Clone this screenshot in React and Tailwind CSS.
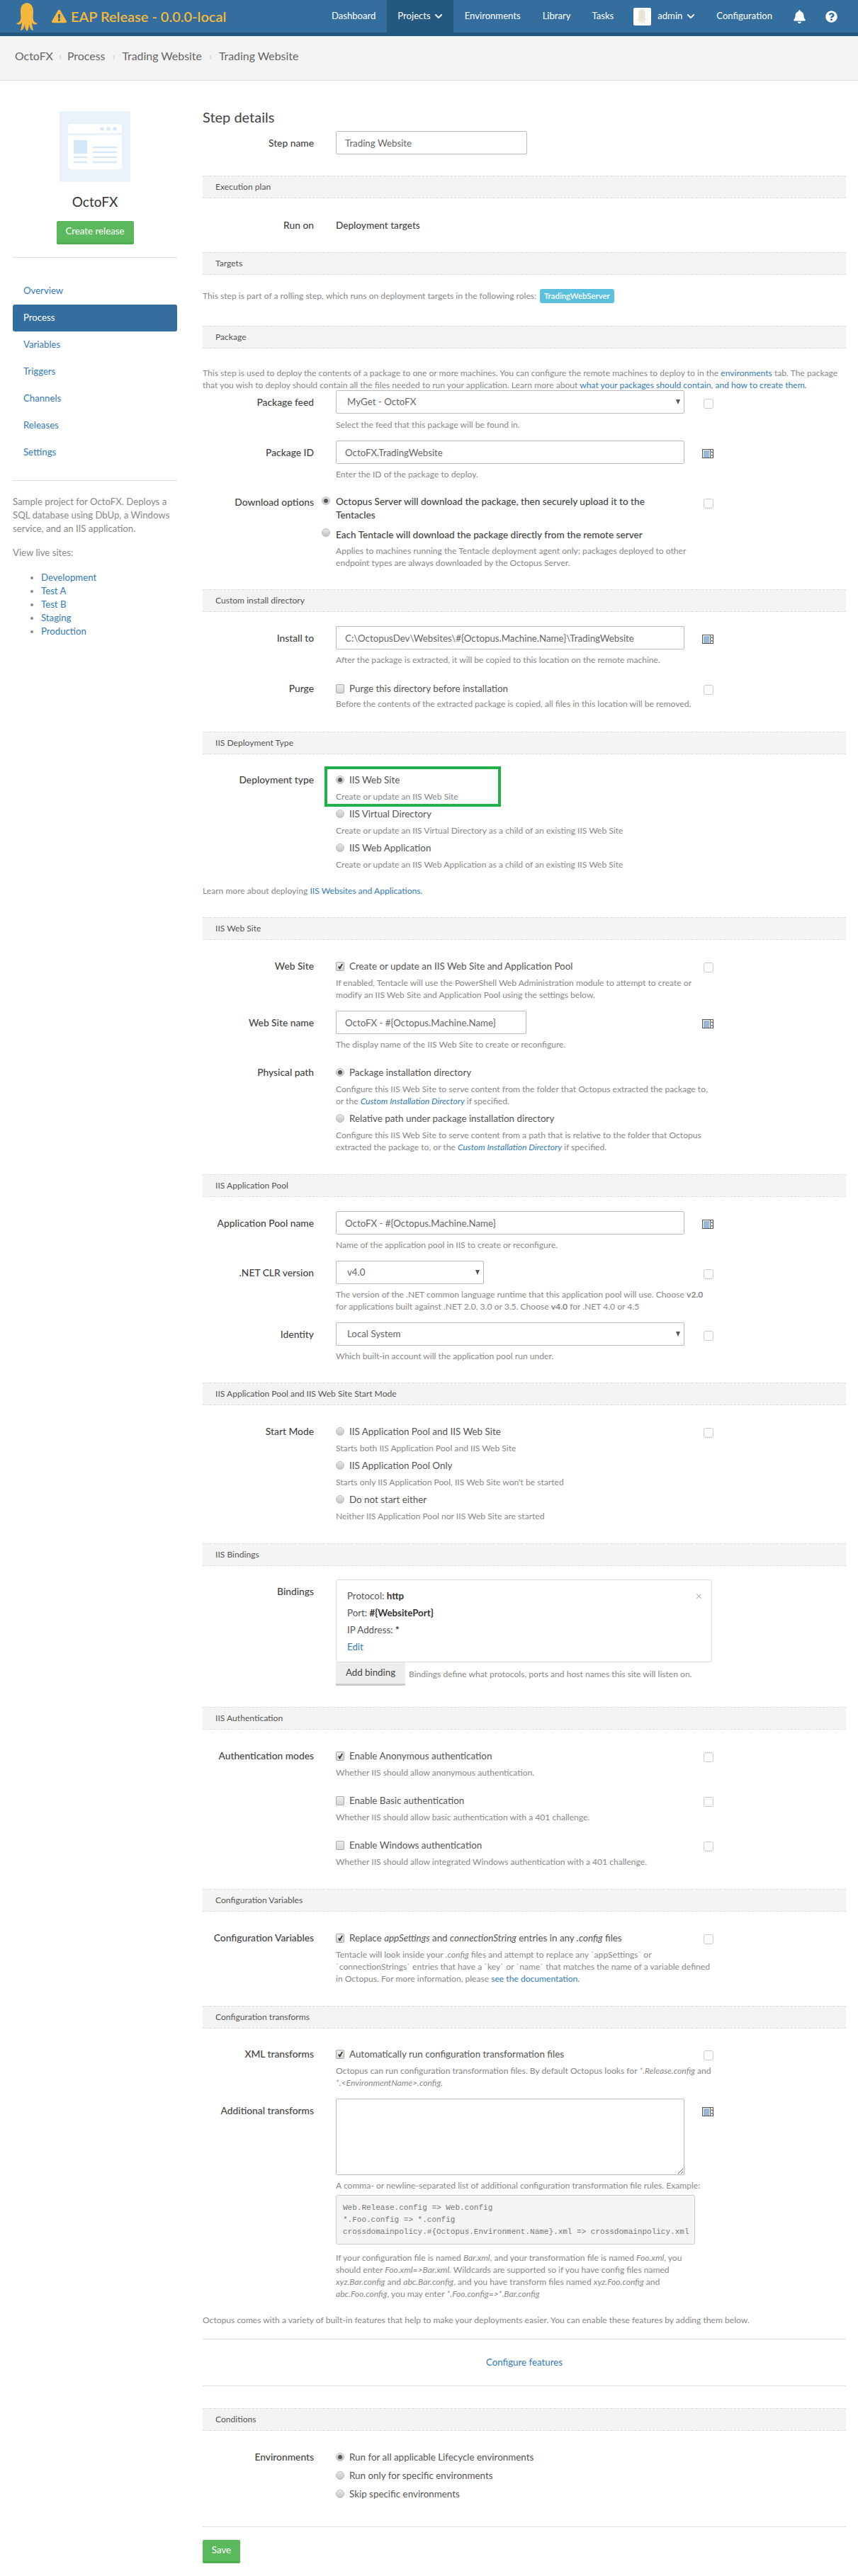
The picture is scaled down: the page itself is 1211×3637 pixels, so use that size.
import React from 'react';
import { FaBell, FaChevronDown, FaExclamationTriangle, FaQuestionCircle } from 'react-icons/fa';

const Octopus = ({ className, color }) => (
    <svg viewBox="0 0 32 40" className={className} fill={color}>
        <path d="M16 0C9 0 6 5 6 12c0 5 1 8 0 12-1 3-3 4-6 5 2 2 5 2 7 0l1-2c0 4-1 8-2 12 3 0 5-4 6-9 0 4 1 8 3 10 2-2 3-6 3-10 1 5 3 9 6 9-1-4-2-8-2-12l1 2c2 2 5 2 7 0-3-1-5-2-6-5-1-4 0-7 0-12 0-7-3-12-10-12z" />
    </svg>
);

const Radio = ({ on }) => (
    <span className="w-[12px] h-[12px] rounded-full border border-[#bbb] bg-linear-to-b from-[#e8e8e8] to-[#c4c4c4] flex items-center justify-center shrink-0">
        {on && <span className="w-[6px] h-[6px] rounded-full bg-[#555]" />}
    </span>
);

const Check = ({ on }) => (
    <span className="w-[12px] h-[13px] rounded-[2px] border border-[#aaa] bg-linear-to-b from-[#eee] to-[#d4d4d4] flex items-center justify-center shrink-0">
        {on && (
            <svg viewBox="0 0 10 10" className="w-[9px] h-[9px]" fill="none" stroke="#333" strokeWidth="2">
                <path d="M2 5l2 3 4-7" />
            </svg>
        )}
    </span>
);

const SideCheck = () => <span className="block w-[14px] h-[14px] rounded-[3px] border border-[#ccc] bg-white" />;

const VarIcon = () => (
    <svg viewBox="0 0 16 13" className="w-[16px] h-[13px]">
        <rect x="0.5" y="0.5" width="15" height="12" fill="#fff" stroke="#555" />
        <path d="M2 3h8M2 5h8M2 7h8M2 9h8M2 11h8" stroke="#2f6fb5" strokeWidth="1" />
        <path d="M11.5 0.5v12" stroke="#555" />
        <path d="M12.5 5l1.2-2.5L15 5zM12.5 8l1.2 2.5L15 8z" fill="#555" />
    </svg>
);

const Help = ({ className = '', children }) => (
    <div className={`text-[12.1px] leading-[17px] text-[#888] whitespace-nowrap ${className}`}>{children}</div>
);

const Link = ({ children }) => <a className="text-[#337ab7]">{children}</a>;

const Bar = ({ title, className = '' }) => (
    <div className={`h-[32px] flex items-center pl-[18px] bg-[#f4f4f4] border-y border-dashed border-[#ddd] text-[12.1px] text-[#555] ${className}`}>
        {title}
    </div>
);

// label column, content column and the little "bind" control on the right
const Row = ({ label, field, side, className = '', children }) => (
    <div className={`flex ${className}`}>
        <div className={`w-[157px] mr-[31px] text-right text-[13.8px] leading-[20px] font-medium text-[#444] shrink-0 whitespace-nowrap ${field ? 'pt-[7px]' : ''}`}>
            {label}
        </div>
        <div className="w-[517px] shrink-0">{children}</div>
        <div className={`w-[16px] flex justify-end items-start ${field ? 'pt-[12px]' : 'pt-[5px]'}`}>
            {side === 'check' && <SideCheck />}
            {side === 'var' && <VarIcon />}
        </div>
    </div>
);

const TextInput = ({ value, w = 'w-[492px]' }) => (
    <input
        readOnly
        value={value}
        className={`block ${w} h-[33px] px-[12px] border border-[#bbb] rounded-[2px] bg-white text-[13.3px] text-[#666] outline-none`}
    />
);

const Select = ({ value, w = 'w-[492px]' }) => (
    <div className={`relative ${w}`}>
        <select className="block w-full h-[33px] pl-[15px] border border-[#bbb] rounded-[2px] bg-white text-[13.3px] text-[#666] appearance-none outline-none">
            <option>{value}</option>
        </select>
        <svg viewBox="0 0 6 7" className="absolute right-[6px] top-[13px] w-[6px] h-[7px]" fill="#555">
            <path d="M0 0h6L3 7z" />
        </svg>
    </div>
);

const Option = ({ type = 'radio', on, label, className = '' }) => (
    <div className={`flex items-center gap-[7px] h-[20px] text-[13.4px] text-[#555] whitespace-nowrap ${className}`}>
        {type === 'radio' ? <Radio on={on} /> : <Check on={on} />}
        <span>{label}</span>
    </div>
);

const navLinks = ['Overview', 'Process', 'Variables', 'Triggers', 'Channels', 'Releases', 'Settings'];
const sites = ['Development', 'Test A', 'Test B', 'Staging', 'Production'];

const Sidebar = () => (
    <aside className="w-[232px] ml-[18px] shrink-0 text-[13.2px]">
        <svg viewBox="0 0 100 100" className="block w-[100px] h-[100px] mt-[43px] mx-auto">
            <rect width="100" height="100" rx="2" fill="#eaf3fb" />
            <rect x="12" y="18" width="76" height="64" rx="5" fill="#fff" />
            <rect x="12" y="31" width="76" height="3" fill="#eaf3fb" />
            <circle cx="60" cy="25" r="2.7" fill="#d5e8f7" />
            <circle cx="69" cy="25" r="2.7" fill="#d5e8f7" />
            <circle cx="78" cy="25" r="2.7" fill="#d5e8f7" />
            <rect x="20" y="41" width="19" height="19" fill="#d5e8f7" />
            <path d="M47 51h34M47 58h34M47 65h34M47 72h34M20 65h19M20 72h19" stroke="#d5e8f7" strokeWidth="2.5" />
        </svg>
        <div className="mt-[14px] text-center text-[19px] leading-[28px] text-[#333]">OctoFX</div>
        <button className="block mx-auto mt-[13px] w-[109px] h-[33px] bg-[#5cb85c] border-b-[3px] border-[#4cae4c] rounded-[2px] text-white text-[13.3px]">
            Create release
        </button>
        <div className="mt-[18px] border-t border-[#ddd]" />
        <nav className="mt-[28px]">
            {navLinks.map((item) => (
                <a
                    key={item}
                    className={`flex items-center h-[38px] pl-[15px] rounded-[3px] ${item === 'Process' ? 'bg-[#336e9f] text-white' : 'text-[#337ab7]'}`}
                >
                    {item}
                </a>
            ))}
        </nav>
        <div className="mt-[20px] border-t border-[#ddd]" />
        <p className="mt-[20px] leading-[19px] text-[#888]">
            Sample project for OctoFX. Deploys a SQL database using DbUp, a Windows service, and an IIS application.
        </p>
        <p className="mt-[15px] leading-[19px] text-[#888]">View live sites:</p>
        <ul className="mt-[16px] pl-[40px] list-disc leading-[19px] text-[#888]">
            {sites.map((site) => (
                <li key={site}>
                    <Link>{site}</Link>
                </li>
            ))}
        </ul>
    </aside>
);

const Header = () => (
    <header className="h-[51px] bg-[#336e9f] border-b-[5px] border-[#24587f] flex items-start text-[13.1px] text-white">
        <Octopus className="w-[32px] h-[40px] ml-[23px] mt-[4px]" color="#f5b83d" />
        <div className="ml-[18px] h-[46px] flex items-center gap-[6px] text-[#f5b83d] text-[20px] font-semibold whitespace-nowrap">
            <FaExclamationTriangle className="w-[21px] h-[20px]" />
            <span>EAP Release - 0.0.0-local</span>
        </div>
        <nav className="ml-auto flex items-center h-[46px]">
            <a className="px-[16px]">Dashboard</a>
            <a className="px-[15px] h-[51px] bg-[#24587f] flex items-center gap-[5px]">
                Projects <FaChevronDown className="w-[12px] h-[12px]" />
            </a>
            <a className="px-[16px]">Environments</a>
            <a className="px-[15px]">Library</a>
            <a className="px-[15px]">Tasks</a>
            <span className="ml-[13px] w-[25px] h-[25px] bg-white rounded-[2px] flex items-center justify-center">
                <Octopus className="w-[17px] h-[21px]" color="#e9e4d6" />
            </span>
            <span className="ml-[9px] w-[37px]">admin</span>
            <FaChevronDown className="ml-[4px] w-[12px] h-[12px]" />
            <a className="ml-[30px]">Configuration</a>
            <FaBell className="ml-[30px] w-[17px] h-[19px]" />
            <FaQuestionCircle className="ml-[28px] mr-[29px] w-[17px] h-[17px]" />
        </nav>
    </header>
);

const App = () => (
    <div className="w-[1211px] min-h-[3637px] bg-white font-['Lato',sans-serif] text-[#555]">
        <Header />
        <div className="h-[63px] bg-[#f4f4f4] border-b border-[#ddd] pl-[21px] pt-[17px] flex items-start text-[15.9px] leading-[22px] text-[#666]">
            <span>OctoFX</span>
            <span className="w-[20px] text-center text-[#ccc]">›</span>
            <span>Process</span>
            <span className="w-[24px] text-center text-[#ccc]">›</span>
            <span>Trading Website</span>
            <span className="w-[24px] text-center text-[#ccc]">›</span>
            <span>Trading Website</span>
        </div>

        <div className="flex">
            <Sidebar />
            <main className="ml-[36px] w-[908px] pt-[36px] pb-[19px]">
                <h2 className="text-[20px] leading-[30px] text-[#444]">Step details</h2>

                <Row label="Step name" field className="mt-[5px]">
                    <TextInput value="Trading Website" w="w-[270px]" />
                </Row>

                <Bar title="Execution plan" className="mt-[30px]" />
                <Row label="Run on" className="mt-[28px]">
                    <div className="text-[13.6px] leading-[20px] font-medium text-[#444]">Deployment targets</div>
                </Row>

                <Bar title="Targets" className="mt-[28px]" />
                <div className="mt-[20px] h-[20px] flex items-center text-[12.1px] text-[#888]">
                    This step is part of a rolling step, which runs on deployment targets in the following roles:
                    <span className="ml-[5px] h-[20px] px-[6px] flex items-center rounded-[3px] bg-[#5bc0de] text-white text-[11.4px] font-semibold">
                        TradingWebServer
                    </span>
                </div>

                <Bar title="Package" className="mt-[32px]" />
                <Help className="mt-[26px]">
                    This step is used to deploy the contents of a package to one or more machines. You can configure the remote machines to deploy to in the <Link>environments</Link> tab. The package
                    <br />
                    that you wish to deploy should contain all the files needed to run your application. Learn more about <Link>what your packages should contain, and how to create them.</Link>
                </Help>
                <Row label="Package feed" field side="check" className="mt-[-1px]">
                    <Select value="MyGet - OctoFX" />
                    <Help className="mt-[7px]">Select the feed that this package will be found in.</Help>
                </Row>
                <Row label="Package ID" field side="var" className="mt-[14px]">
                    <TextInput value="OctoFX.TradingWebsite" />
                    <Help className="mt-[6px]">Enter the ID of the package to deploy.</Help>
                </Row>
                <Row label="Download options" side="check" className="mt-[21px]">
                    <div className="relative text-[13.6px] leading-[19px] font-medium text-[#444]">
                        <span className="absolute left-[-20px] top-[2px]"><Radio on /></span>
                        Octopus Server will download the package, then securely upload it to the
                        <br />
                        Tentacles
                    </div>
                    <div className="relative mt-[8px] text-[13.6px] leading-[20px] font-medium text-[#444]">
                        <span className="absolute left-[-20px] top-[1px]"><Radio /></span>
                        Each Tentacle will download the package directly from the remote server
                    </div>
                    <Help className="mt-[4px]">
                        Applies to machines running the Tentacle deployment agent only; packages deployed to other
                        <br />
                        endpoint types are always downloaded by the Octopus Server.
                    </Help>
                </Row>

                <Bar title="Custom install directory" className="mt-[29px]" />
                <Row label="Install to" field side="var" className="mt-[20px]">
                    <TextInput value="C:\OctopusDev\Websites\#{Octopus.Machine.Name}\TradingWebsite" />
                    <Help className="mt-[6px]">After the package is extracted, it will be copied to this location on the remote machine.</Help>
                </Row>
                <Row label="Purge" side="check" className="mt-[22px]">
                    <Option type="check" label="Purge this directory before installation" />
                    <Help className="mt-[3px]">Before the contents of the extracted package is copied, all files in this location will be removed.</Help>
                </Row>

                <Bar title="IIS Deployment Type" className="mt-[31px]" />
                <Row label="Deployment type" className="mt-[26px]">
                    <div className="relative">
                        <div className="absolute left-[-16px] top-[-9px] w-[249px] h-[57px] border-[4px] border-[#22b04a]" />
                        <Option on label="IIS Web Site" />
                        <Help className="mt-[5px]">Create or update an IIS Web Site</Help>
                        <Option label="IIS Virtual Directory" className="mt-[6px]" />
                        <Help className="mt-[5px]">Create or update an IIS Virtual Directory as a child of an existing IIS Web Site</Help>
                        <Option label="IIS Web Application" className="mt-[6px]" />
                        <Help className="mt-[5px]">Create or update an IIS Web Application as a child of an existing IIS Web Site</Help>
                    </div>
                </Row>
                <Help className="mt-[20px]">
                    Learn more about deploying <Link>IIS Websites and Applications.</Link>
                </Help>

                <Bar title="IIS Web Site" className="mt-[29px]" />
                <Row label="Web Site" side="check" className="mt-[27px]">
                    <Option type="check" on label="Create or update an IIS Web Site and Application Pool" />
                    <Help className="mt-[5px]">
                        If enabled, Tentacle will use the PowerShell Web Administration module to attempt to create or
                        <br />
                        modify an IIS Web Site and Application Pool using the settings below.
                    </Help>
                </Row>
                <Row label="Web Site name" field side="var" className="mt-[14px]">
                    <TextInput value="OctoFX - #{Octopus.Machine.Name}" w="w-[269px]" />
                    <Help className="mt-[6px]">The display name of the IIS Web Site to create or reconfigure.</Help>
                </Row>
                <Row label="Physical path" className="mt-[21px]">
                    <Option on label="Package installation directory" />
                    <Help className="mt-[5px]">
                        Configure this IIS Web Site to serve content from the folder that Octopus extracted the package to,
                        <br />
                        or the <em className="text-[#337ab7]">Custom Installation Directory</em> if specified.
                    </Help>
                    <Option label="Relative path under package installation directory" className="mt-[6px]" />
                    <Help className="mt-[5px]">
                        Configure this IIS Web Site to serve content from a path that is relative to the folder that Octopus
                        <br />
                        extracted the package to, or the <em className="text-[#337ab7]">Custom Installation Directory</em> if specified.
                    </Help>
                </Row>

                <Bar title="IIS Application Pool" className="mt-[30px]" />
                <Row label="Application Pool name" field side="var" className="mt-[20px]">
                    <TextInput value="OctoFX - #{Octopus.Machine.Name}" />
                    <Help className="mt-[6px]">Name of the application pool in IIS to create or reconfigure.</Help>
                </Row>
                <Row label=".NET CLR version" field side="check" className="mt-[14px]">
                    <Select value="v4.0" w="w-[209px]" />
                    <Help className="mt-[6px]">
                        The version of the .NET common language runtime that this application pool will use. Choose <b>v2.0</b>
                        <br />
                        for applications built against .NET 2.0, 3.0 or 3.5. Choose <b>v4.0</b> for .NET 4.0 or 4.5
                    </Help>
                </Row>
                <Row label="Identity" field side="check" className="mt-[14px]">
                    <Select value="Local System" />
                    <Help className="mt-[6px]">Which built-in account will the application pool run under.</Help>
                </Row>

                <Bar title="IIS Application Pool and IIS Web Site Start Mode" className="mt-[29px]" />
                <Row label="Start Mode" side="check" className="mt-[27px]">
                    <Option label="IIS Application Pool and IIS Web Site" />
                    <Help className="mt-[5px]">Starts both IIS Application Pool and IIS Web Site</Help>
                    <Option label="IIS Application Pool Only" className="mt-[6px]" />
                    <Help className="mt-[5px]">Starts only IIS Application Pool, IIS Web Site won't be started</Help>
                    <Option label="Do not start either" className="mt-[6px]" />
                    <Help className="mt-[5px]">Neither IIS Application Pool nor IIS Web Site are started</Help>
                </Row>

                <Bar title="IIS Bindings" className="mt-[30px]" />
                <Row label="Bindings" field className="mt-[19px]">
                    <div className="relative w-[531px] h-[117px] pt-[10px] pl-[15px] border border-[#ddd] rounded-[3px] text-[13.3px] leading-[24px] text-[#555]">
                        <div>Protocol: <b className="text-[#333]">http</b></div>
                        <div>Port: <b className="text-[#333]">#{'{'}WebsitePort{'}'}</b></div>
                        <div>IP Address: <b className="text-[#333]">*</b></div>
                        <Link>Edit</Link>
                        <span className="absolute right-[13px] top-[12px] text-[16px] leading-[20px] text-[#bbb]">×</span>
                    </div>
                    <div className="flex items-center">
                        <button className="w-[98px] h-[33px] bg-[#eee] border-b-[3px] border-[#ccc] text-[13.3px] text-[#444]">Add binding</button>
                        <Help className="ml-[5px]">Bindings define what protocols, ports and host names this site will listen on.</Help>
                    </div>
                </Row>

                <Bar title="IIS Authentication" className="mt-[30px]" />
                <Row label="Authentication modes" side="check" className="mt-[27px]">
                    <Option type="check" on label="Enable Anonymous authentication" />
                    <Help className="mt-[5px]">Whether IIS should allow anonymous authentication.</Help>
                </Row>
                <Row side="check" className="mt-[21px]">
                    <Option type="check" label="Enable Basic authentication" />
                    <Help className="mt-[5px]">Whether IIS should allow basic authentication with a 401 challenge.</Help>
                </Row>
                <Row side="check" className="mt-[21px]">
                    <Option type="check" label="Enable Windows authentication" />
                    <Help className="mt-[5px]">Whether IIS should allow integrated Windows authentication with a 401 challenge.</Help>
                </Row>

                <Bar title="Configuration Variables" className="mt-[30px]" />
                <Row label="Configuration Variables" side="check" className="mt-[27px]">
                    <Option type="check" on label={<>Replace <em>appSettings</em> and <em>connectionString</em> entries in any <em>.config</em> files</>} />
                    <Help className="mt-[5px]">
                        Tentacle will look inside your <em>.config</em> files and attempt to replace any `appSettings` or
                        <br />
                        `connectionStrings` entries that have a `key` or `name` that matches the name of a variable defined
                        <br />
                        in Octopus. For more information, please <Link>see the documentation.</Link>
                    </Help>
                </Row>

                <Bar title="Configuration transforms" className="mt-[30px]" />
                <Row label="XML transforms" side="check" className="mt-[26px]">
                    <Option type="check" on label="Automatically run configuration transformation files" />
                    <Help className="mt-[5px]">
                        Octopus can run configuration transformation files. By default Octopus looks for <em>*.Release.config</em> and
                        <br />
                        <em>*.&lt;EnvironmentName&gt;.config.</em>
                    </Help>
                </Row>
                <Row label="Additional transforms" field side="var" className="mt-[14px]">
                    <textarea readOnly className="block w-[492px] h-[108px] border border-[#bbb] rounded-[2px] bg-white outline-none" />
                    <Help className="mt-[6px]">A comma- or newline-separated list of additional configuration transformation file rules. Example:</Help>
                    <pre className="mt-[5px] w-[507px] h-[70px] pl-[9px] pt-[9px] bg-[#f5f5f5] border border-[#ccc] rounded-[3px] font-['Liberation_Mono',monospace] text-[11px] leading-[17px] text-[#777]">
                        {'Web.Release.config => Web.config\n*.Foo.config => *.config\ncrossdomainpolicy.#{Octopus.Environment.Name}.xml => crossdomainpolicy.xml'}
                    </pre>
                    <Help className="mt-[10px]">
                        If your configuration file is named <em>Bar.xml</em>, and your transformation file is named <em>Foo.xml</em>, you
                        <br />
                        should enter <em>Foo.xml=&gt;Bar.xml.</em> Wildcards are supported so if you have config files named
                        <br />
                        <em>xyz.Bar.config</em> and <em>abc.Bar.config</em>, and you have transform files named <em>xyz.Foo.config</em> and
                        <br />
                        <em>abc.Foo.config</em>, you may enter <em>*.Foo.config=&gt;*.Bar.config</em>
                    </Help>
                </Row>
                <Help className="mt-[20px]">
                    Octopus comes with a variety of built-in features that help to make your deployments easier. You can enable these features by adding them below.
                </Help>

                <div className="mt-[18px] h-[67px] border-y border-[#ddd] flex items-center justify-center text-[13.3px]">
                    <Link>Configure features</Link>
                </div>

                <Bar title="Conditions" className="mt-[31px]" />
                <Row label="Environments" className="mt-[27px]">
                    <Option on label="Run for all applicable Lifecycle environments" />
                    <Option label="Run only for specific environments" className="mt-[6px]" />
                    <Option label="Skip specific environments" className="mt-[6px]" />
                </Row>

                <div className="mt-[36px] border-t border-[#ddd]" />
                <button className="block mt-[18px] w-[53px] h-[33px] bg-[#5cb85c] border-b-[3px] border-[#4cae4c] rounded-[2px] text-white text-[13.3px]">
                    Save
                </button>
            </main>
        </div>
    </div>
);

export default App;
